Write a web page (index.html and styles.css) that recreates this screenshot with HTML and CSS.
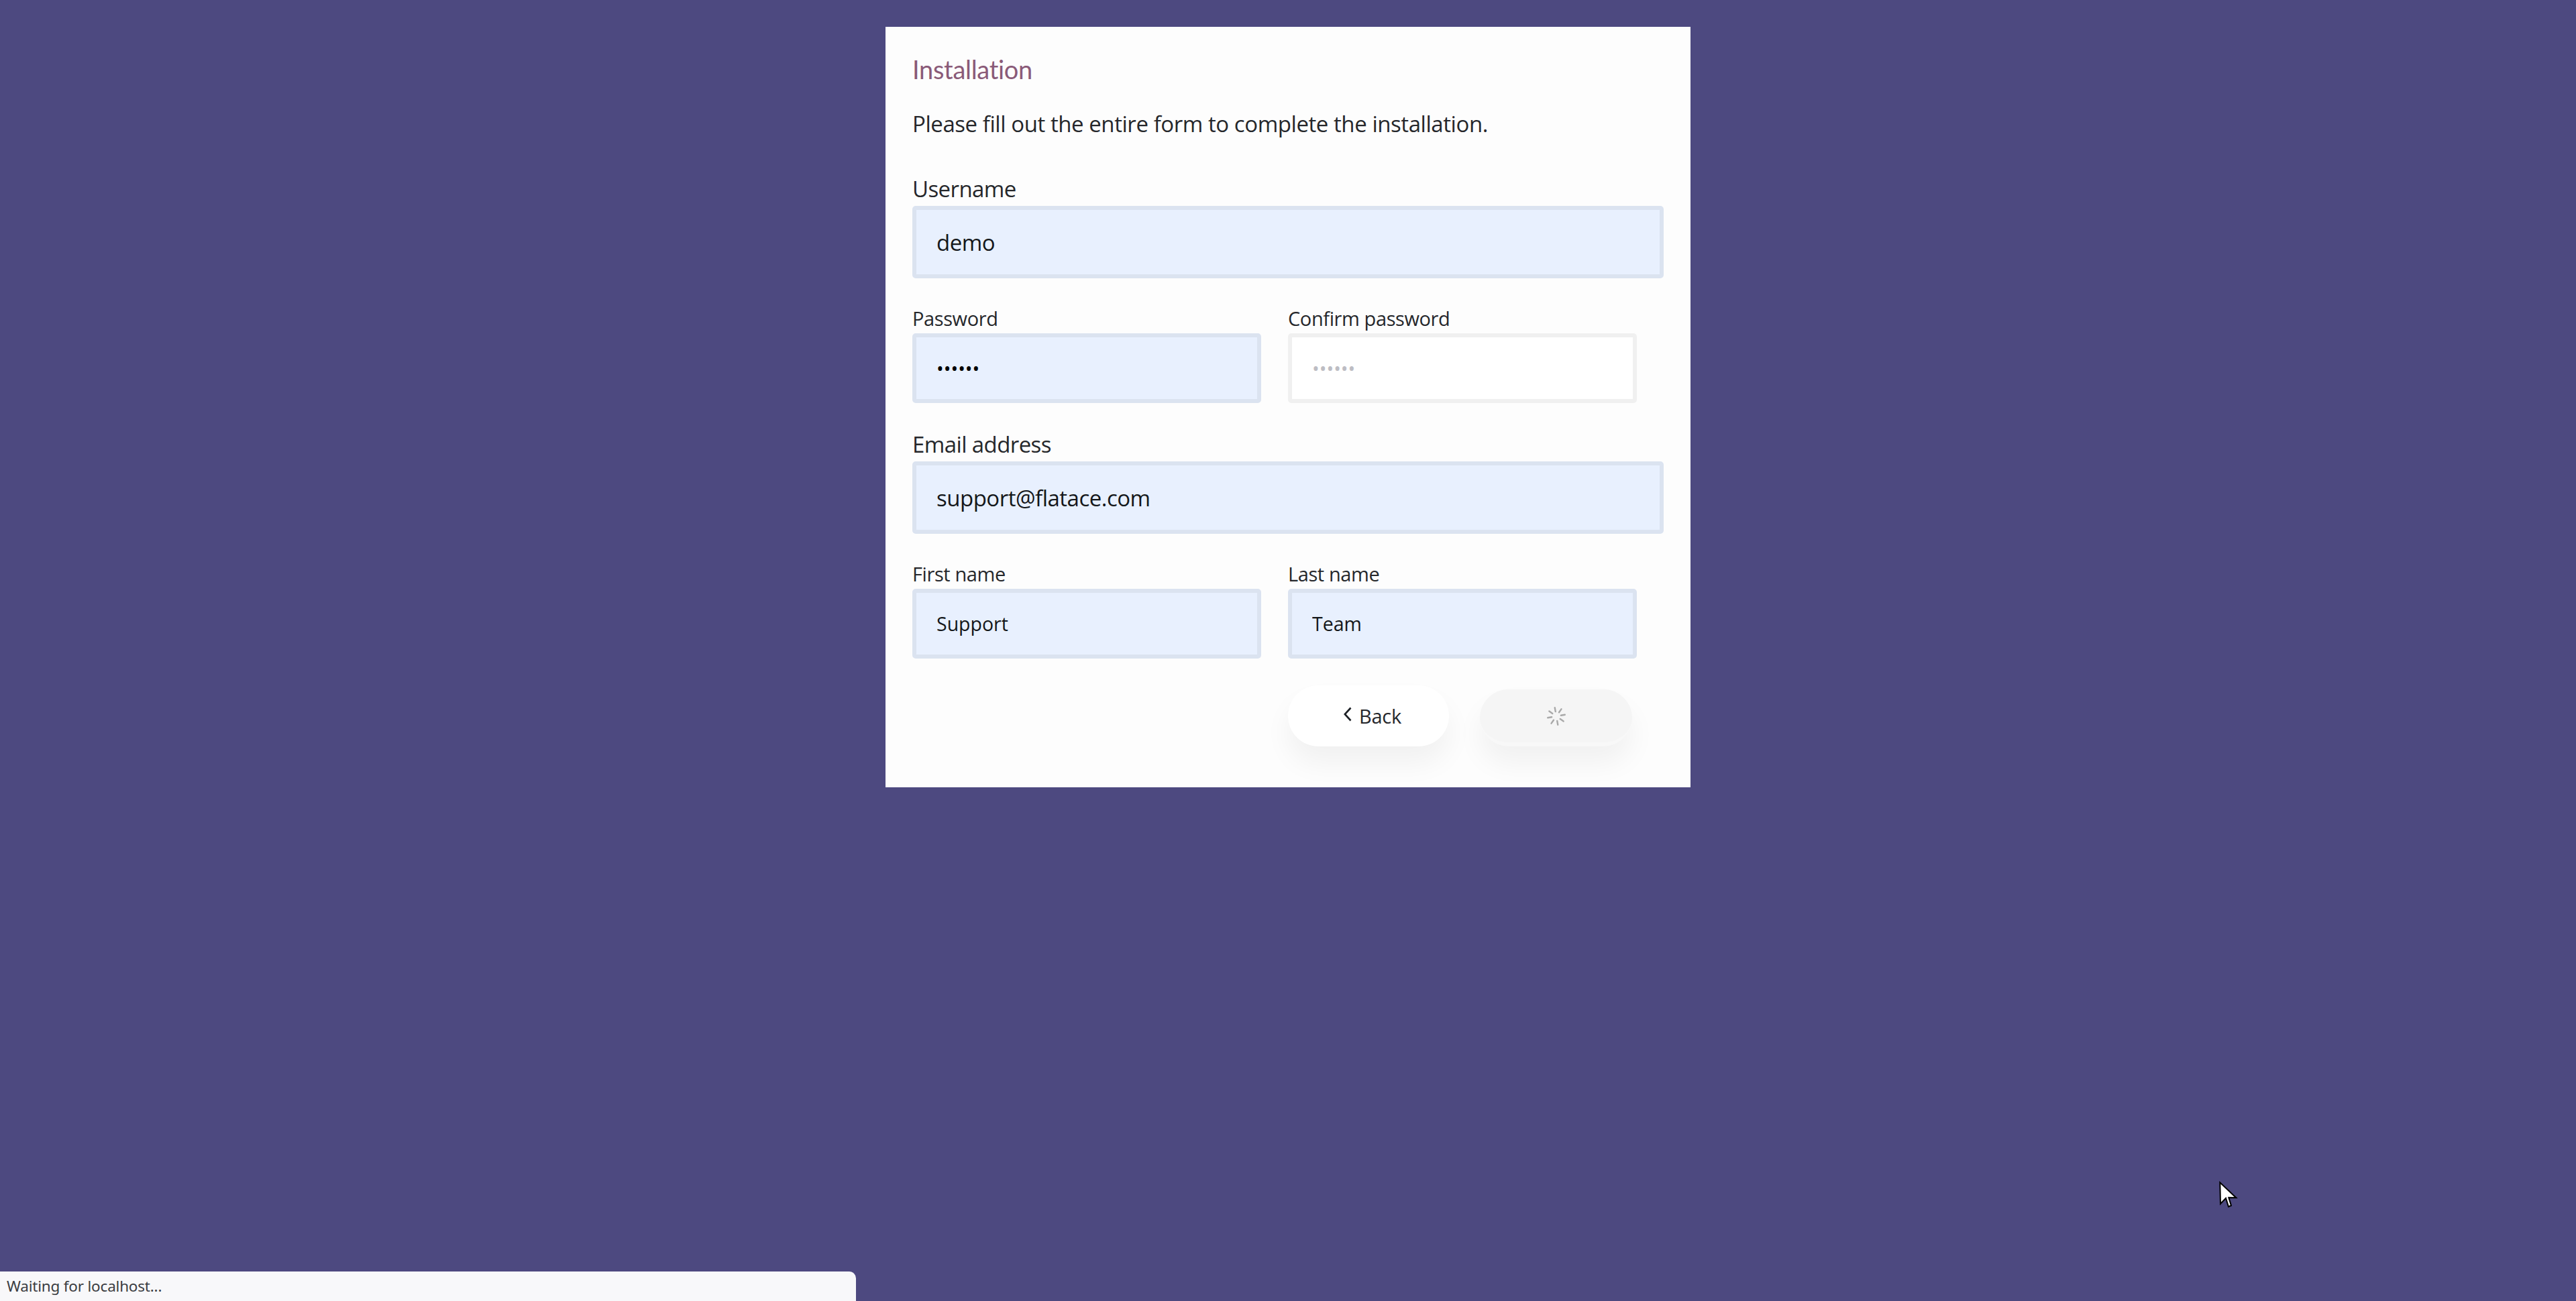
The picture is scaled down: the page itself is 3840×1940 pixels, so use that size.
FILE: index.html
```html
<!DOCTYPE html>
<html lang="en">
<head>
<meta charset="utf-8">
<title>Installation</title>
<link rel="stylesheet" href="styles.css">
</head>
<body>
<main class="card">
  <h1 class="title">Installation</h1>
  <p class="intro">Please fill out the entire form to complete the installation.</p>
  <form class="form">
    <div class="field">
      <label class="label label-lg">Username</label>
      <input class="input input-lg filled" type="text" value="demo">
    </div>
    <div class="row">
      <div class="field half">
        <label class="label">Password</label>
        <input class="input filled dots" type="password" value="secret">
      </div>
      <div class="field half">
        <label class="label">Confirm password</label>
        <input class="input empty dots" type="password" placeholder="••••••">
      </div>
    </div>
    <div class="field">
      <label class="label label-lg">Email address</label>
      <input class="input input-lg filled" type="text" value="support@flatace.com">
    </div>
    <div class="row">
      <div class="field half">
        <label class="label">First name</label>
        <input class="input filled" type="text" value="Support">
      </div>
      <div class="field half">
        <label class="label">Last name</label>
        <input class="input filled" type="text" value="Team">
      </div>
    </div>
    <div class="actions">
      <button class="btn btn-back" type="button">
        <svg class="chevron" width="14" height="22" viewBox="0 0 14 22"><path d="M11.500 1.500 2.800 11l8.700 9.500" fill="none" stroke="#1d2126" stroke-width="2.600"/></svg>
        <span>Back</span>
      </button>
      <button class="btn btn-busy" type="button" disabled aria-label="Loading">
        <svg width="30" height="30" viewBox="-15 -15 30 30" class="spinner">
          <g stroke="#a9a9a9" stroke-width="2.400" stroke-linecap="round">
            <line x1="0" y1="-7" x2="0" y2="-13" transform="rotate(-10)"/>
            <line x1="0" y1="-7" x2="0" y2="-13" transform="rotate(35)"/>
            <line x1="0" y1="-7" x2="0" y2="-13" transform="rotate(80)"/>
            <line x1="0" y1="-7" x2="0" y2="-13" transform="rotate(125)"/>
            <line x1="0" y1="-7" x2="0" y2="-13" transform="rotate(170)"/>
            <line x1="0" y1="-7" x2="0" y2="-13" transform="rotate(215)"/>
            <line x1="0" y1="-7" x2="0" y2="-13" transform="rotate(260)"/>
            <line x1="0" y1="-7" x2="0" y2="-13" transform="rotate(305)"/>
          </g>
        </svg>
      </button>
    </div>
  </form>
</main>
<div class="status">Waiting for localhost...</div>
<svg class="cursor" width="60" height="60" viewBox="0 0 60 60"><path d="M19.300 13.300 20 45l8-8.300 4 12.600 4-1.600-3.700-12 11 .300z" fill="#fff" stroke="#000" stroke-width="2" stroke-linejoin="miter"/></svg>
</body>
</html>
```

FILE: styles.css
```css
* { box-sizing: border-box; }
html, body { margin: 0; height: 100%; }
body {
  background: #4d4980;
  font-family: "Open Sans", "Noto Sans", sans-serif;
  color: #25272b;
  overflow: hidden;
  position: relative;
  padding-top: 40px;
}
.card {
  width: 1200px;
  height: 1134px;
  margin: 0 auto;
  padding: 40px 40px 0;
  background: #fdfdfd;
}
.title {
  margin: 0;
  height: 50px;
  font-family: "Lato", sans-serif;
  font-variant-ligatures: none;
  font-weight: 400;
  font-size: 38px;
  letter-spacing: -0.3px;
  line-height: 46px;
  color: #8a5a78;
}
.intro {
  margin: 30px 0 0;
  height: 50px;
  font-size: 33px;
  letter-spacing: -0.44px;
  line-height: 50px;
}
.form { margin-top: 52px; }
.field { margin-bottom: 42px; }
.row { display: flex; gap: 40px; }
.half { width: 520px; }
.label {
  display: block;
  height: 40px;
  font-size: 29px;
  letter-spacing: -0.4px;
  line-height: 35px;
}
.label-lg {
  height: 45px;
  font-size: 33px;
  letter-spacing: -0.6px;
  line-height: 40px;
}
.input {
  display: block;
  width: 100%;
  height: 104px;
  padding: 0 30px;
  border: 6px solid #dbe3f0;
  border-radius: 5px;
  outline: none;
  font-family: inherit;
  font-size: 28.500px;
  color: #14171a;
}
.input-lg { height: 108px; font-size: 33px; letter-spacing: -0.5px; }
.filled { background: #e8f0fe; }
.empty { background: #fff; border-color: #f0f0f0; }
.empty::placeholder { color: #bdbdc3; opacity: 1; }
.dots { font-size: 28.500px; }
.dots.filled { color: #000; }
.actions {
  display: flex;
  align-items: flex-end;
  gap: 46px;
  margin: -2px 0 0 560px;
}
.btn {
  display: flex;
  align-items: center;
  justify-content: center;
  border: 0;
  border-radius: 46px;
  font-family: inherit;
  box-shadow: 0 25px 40px rgba(0, 0, 0, .05);
}
.btn-back {
  width: 240px;
  height: 91px;
  gap: 10px;
  padding: 0 0 0 11px;
  background: #fff;
  font-size: 29px;
  letter-spacing: -0.3px;
  color: #25272b;
}
.chevron { margin-top: -6px; }
.btn-busy {
  width: 227px;
  height: 85px;
  background: #f5f5f5;
  border-bottom: 6px solid #f8f8f8;
}
.status {
  position: absolute;
  left: 0;
  bottom: 0;
  width: 1276px;
  height: 44px;
  padding: 0 10px;
  background: #f8f8fa;
  border-top-right-radius: 10px;
  font-family: "Noto Sans", "Open Sans", sans-serif;
  font-size: 22.500px;
  letter-spacing: -0.2px;
  line-height: 44px;
  color: #3b3d42;
}
.cursor {
  position: absolute;
  left: 3290px;
  top: 1750px;
}
```
